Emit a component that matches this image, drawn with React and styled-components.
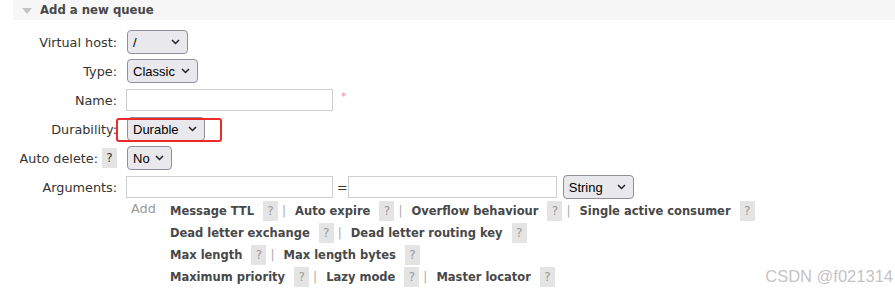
import React from 'react'
import styled, { createGlobalStyle } from 'styled-components'

const Global = createGlobalStyle`
  body {
    margin: 0;
    background: #fff;
    font-family: "DejaVu Sans", Verdana, sans-serif;
    font-size: 12.8px;
    color: #333;
  }
`

const Page = styled.div`
  position: relative;
  width: 895px;
  height: 298px;
  overflow: hidden;
`

const Header = styled.div`
  margin-left: 13px;
  height: 20px;
  background: #f7f7f7;
  display: flex;
  align-items: center;
  gap: 8px;
  padding-left: 9px;
  font-weight: bold;
  color: #484848;
  font-size: 11.7px;
`

const Triangle = styled.span`
  width: 0;
  height: 0;
  border-left: 5px solid transparent;
  border-right: 5px solid transparent;
  border-top: 6px solid #c4c4c4;
  margin-top: 1px;
`

const Form = styled.div`
  display: grid;
  grid-template-columns: 117px auto;
  column-gap: 10px;
  row-gap: 5px;
  padding-top: 10px;
  align-items: center;
`

const Label = styled.div`
  display: flex;
  justify-content: flex-end;
  align-items: center;
  gap: 4px;
  white-space: nowrap;
  height: 24px;
`

const Help = styled.span`
  display: inline-flex;
  align-items: center;
  justify-content: center;
  width: 15px;
  height: 20px;
  background: #e4e4e4;
  color: ${p => (p.dark ? '#333' : '#999')};
  font-weight: normal;
  font-size: 12px;
`

const Controls = styled.div`
  display: flex;
  align-items: center;
  gap: 6px;
  position: relative;
`

const SelectBox = styled.div`
  box-sizing: border-box;
  width: ${p => p.w}px;
  height: 24px;
  border: 1px solid #8f8f9d;
  border-radius: 4px;
  background: #e9e9ed;
  display: flex;
  align-items: center;
  justify-content: space-between;
  padding: 0 7px 0 5px;
  font-family: "Liberation Sans", Arial, sans-serif;
  font-size: 13px;
  color: #000;
`

const Chevron = () => (
  <svg width="9" height="6" viewBox="0 0 9 6">
    <path d="M1 1 L4.5 4.5 L8 1" fill="none" stroke="#222" strokeWidth="1.5" />
  </svg>
)

const Select = ({ w, children }) => (
  <SelectBox w={w}>
    <span>{children}</span>
    <Chevron />
  </SelectBox>
)

const Input = styled.div`
  box-sizing: border-box;
  width: ${p => p.w}px;
  height: 22px;
  border: 1px solid #cfcfcf;
  background: #fff;
  margin-left: -1px;
`

const Star = styled.span`
  color: #f58aa8;
  font-size: 11px;
  margin-left: 2px;
  margin-top: -8px;
`

const Eq = styled.span`
  color: #333;
  margin: 0 -5px 0 -2px;
`

const Highlight = styled.div`
  position: absolute;
  left: -11px;
  top: 1px;
  width: 106px;
  height: 24px;
  box-sizing: border-box;
  border: 2px solid #ec2a2a;
  border-radius: 3px;
`

const AddArea = styled.div`
  display: flex;
  margin-left: 131px;
  margin-top: 1px;
`

const AddLabel = styled.span`
  color: #999;
  width: 39px;
  line-height: 22px;
  margin-top: -2px;
`

const Lines = styled.div`
  display: flex;
  flex-direction: column;
`

const Line = styled.div`
  display: flex;
  align-items: center;
  height: 22px;
`

const Item = styled.span`
  font-weight: bold;
  color: #484848;
  font-size: 11.5px;
  margin-right: 9px;
`

const Sep = styled.span`
  color: #aaa;
  font-size: 12px;
  margin: 0 9px 0 4px;
`

const Watermark = styled.div`
  position: absolute;
  right: 2px;
  bottom: 12px;
  font-family: "Liberation Sans", Arial, sans-serif;
  font-size: 16.5px;
  color: #c4c4c4;
`

const lines = [
  ['Message TTL', 'Auto expire', 'Overflow behaviour', 'Single active consumer'],
  ['Dead letter exchange', 'Dead letter routing key'],
  ['Max length', 'Max length bytes'],
  ['Maximum priority', 'Lazy mode', 'Master locator'],
]

export default function App() {
  return (
    <Page>
      <Global />
      <Header>
        <Triangle />
        Add a new queue
      </Header>
      <Form>
        <Label>Virtual host:</Label>
        <Controls><Select w={61}>/</Select></Controls>

        <Label>Type:</Label>
        <Controls><Select w={71}>Classic</Select></Controls>

        <Label>Name:</Label>
        <Controls>
          <Input w={207} />
          <Star>*</Star>
        </Controls>

        <Label>Durability:</Label>
        <Controls>
          <Select w={78}>Durable</Select>
          <Highlight />
        </Controls>

        <Label>Auto delete: <Help dark>?</Help></Label>
        <Controls><Select w={45}>No</Select></Controls>

        <Label>Arguments:</Label>
        <Controls>
          <Input w={207} />
          <Eq>=</Eq>
          <Input w={209} />
          <Select w={71}>String</Select>
        </Controls>
      </Form>
      <AddArea>
        <AddLabel>Add</AddLabel>
        <Lines>
          {lines.map((items, i) => (
            <Line key={i}>
              {items.map((t, j) => (
                <React.Fragment key={t}>
                  {j > 0 && <Sep>|</Sep>}
                  <Item>{t}</Item>
                  <Help>?</Help>
                </React.Fragment>
              ))}
            </Line>
          ))}
        </Lines>
      </AddArea>
      <Watermark>CSDN @f021314</Watermark>
    </Page>
  )
}
